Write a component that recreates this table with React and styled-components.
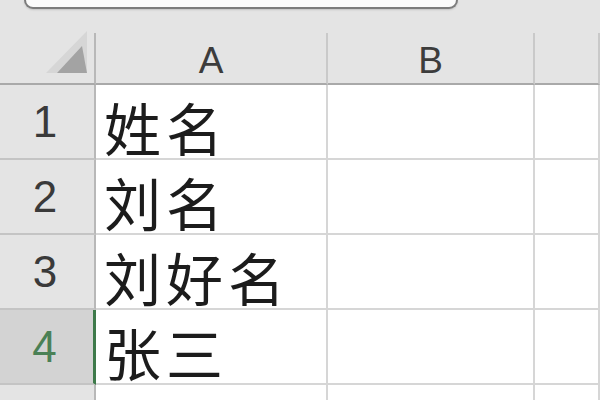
import React from 'react';
import styled, { createGlobalStyle } from 'styled-components';

const GlobalStyle = createGlobalStyle`
  html, body {
    margin: 0;
    padding: 0;
    background: #e4e4e4;
    overflow: hidden;
  }
`;

const Page = styled.div`
  width: 600px;
  height: 400px;
  background: #e4e4e4;
  display: flex;
  flex-direction: column;
  overflow: hidden;
  font-family: "Liberation Sans", "Noto Sans CJK SC", sans-serif;
`;

const TopBar = styled.div`
  height: 33px;
  flex-shrink: 0;
  display: flex;
  align-items: flex-start;
  padding-left: 24px;
  box-sizing: border-box;
`;

const NameBox = styled.div`
  width: 434px;
  height: 9px;
  box-sizing: border-box;
  background: #fbfbfb;
  border: 2px solid #7c7c7c;
  border-top: none;
  border-radius: 0 0 14px 14px;
  box-shadow: 0 1px 2px rgba(0, 0, 0, 0.15);
`;

const Grid = styled.div`
  display: grid;
  grid-template-columns: 96px 232px 207px 1fr;
  grid-template-rows: 52px repeat(4, 75px) 75px;
  flex-shrink: 0;
`;

const Corner = styled.div`
  border-right: 2px solid #b8b8b8;
  border-bottom: 2px solid #a9a9a9;
  display: flex;
  align-items: flex-end;
  justify-content: flex-end;
  padding: 0 6px 8px 0;
`;

const ColHead = styled.div`
  border-right: 2px solid #c9c9c9;
  border-bottom: 2px solid #a9a9a9;
  display: flex;
  align-items: center;
  justify-content: center;
  font-size: 37px;
  color: #3c3c3c;
  padding-top: 6px;
`;

const RowHead = styled.div`
  background: ${(p) => (p.$active ? '#d3d3d3' : '#e4e4e4')};
  border-right: ${(p) => (p.$active ? '3px solid #3e7a4a' : '2px solid #b8b8b8')};
  border-bottom: 2px solid #c4c4c4;
  display: flex;
  align-items: center;
  justify-content: center;
  font-size: 44px;
  color: ${(p) => (p.$active ? '#4a8055' : '#3a3a3a')};
  padding-right: 4px;
`;

const Cell = styled.div`
  background: #fff;
  border-right: 2px solid #d6d6d6;
  border-bottom: 2px solid #d6d6d6;
  display: flex;
  align-items: center;
  padding: 10px 0 0 8px;
  font-family: "Noto Sans CJK SC", sans-serif;
  font-size: 57px;
  line-height: 1;
  letter-spacing: 5px;
  color: #1c1c1c;
  white-space: nowrap;
`;

const SelectAll = () => (
  <svg width="44" height="44" viewBox="0 0 44 44">
    <polygon points="2,42 43,42 43,0" fill="#d6d6d6" />
    <polygon points="13,42 43,42 38,15" fill="#a3a3a3" />
  </svg>
);

const rows = ['姓名', '刘名', '刘好名', '张三', ''];

export default function App() {
  return (
    <Page>
      <GlobalStyle />
      <TopBar>
        <NameBox />
      </TopBar>
      <Grid>
        <Corner>
          <SelectAll />
        </Corner>
        <ColHead>A</ColHead>
        <ColHead>B</ColHead>
        <ColHead />
        {rows.map((text, i) => (
          <React.Fragment key={i}>
            <RowHead $active={i === 3}>{i < 4 ? i + 1 : ''}</RowHead>
            <Cell>{text}</Cell>
            <Cell />
            <Cell />
          </React.Fragment>
        ))}
      </Grid>
    </Page>
  );
}
